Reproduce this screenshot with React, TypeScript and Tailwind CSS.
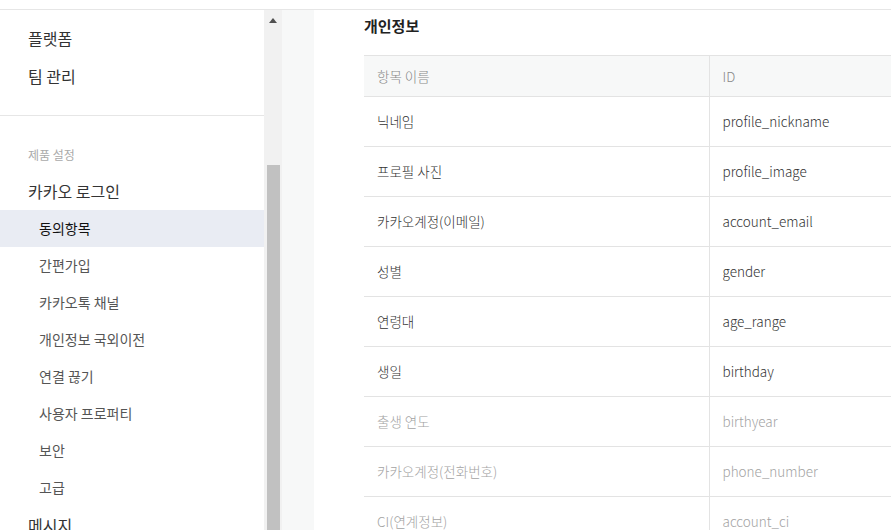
import React from "react";

const font = { fontFamily: '"Noto Sans CJK KR", "Noto Sans", sans-serif' };

const subMenu = ["동의항목", "간편가입", "카카오톡 채널", "개인정보 국외이전", "연결 끊기", "사용자 프로퍼티", "보안", "고급"];

const rows: Array<{ name: string; id: string; muted?: boolean }> = [
  { name: "닉네임", id: "profile_nickname" },
  { name: "프로필 사진", id: "profile_image" },
  { name: "카카오계정(이메일)", id: "account_email" },
  { name: "성별", id: "gender" },
  { name: "연령대", id: "age_range" },
  { name: "생일", id: "birthday" },
  { name: "출생 연도", id: "birthyear", muted: true },
  { name: "카카오계정(전화번호)", id: "phone_number", muted: true },
  { name: "CI(연계정보)", id: "account_ci", muted: true },
];

function Sidebar() {
  return (
    <aside className="w-[264px] shrink-0 bg-white">
      <div className="pt-[9px] pb-[20px] border-b border-[#e6e6e6]">
        <div className="flex h-[38px] items-center pl-[28px] text-[16px] text-[#333]">플랫폼</div>
        <div className="flex h-[38px] items-center pl-[28px] text-[16px] text-[#333]">팀 관리</div>
      </div>
      <div className="pt-[22px]">
        <div className="flex h-[34px] items-center pl-[28px] text-[12px] text-[#aaa]">제품 설정</div>
        <div className="flex h-[38px] items-center pl-[28px] text-[16px] text-[#333]">카카오 로그인</div>
        {subMenu.map((item, i) => (
          <div
            key={item}
            className={
              i === 0
                ? "flex h-[37px] items-center bg-[#e9ecf3] pl-[39px] text-[14px] text-[#111]"
                : "flex h-[37px] items-center pl-[39px] text-[14px] text-[#555]"
            }
          >
            {item}
          </div>
        ))}
        <div className="flex h-[38px] items-center pl-[28px] text-[16px] text-[#333]">메시지</div>
      </div>
    </aside>
  );
}

function Scrollbar() {
  return (
    <div className="flex w-[18px] shrink-0 flex-col items-center bg-[#f1f1f1]">
      <div className="flex h-[20px] w-full items-center justify-center pt-[1px]">
        <svg width="8" height="5" viewBox="0 0 8 5">
          <path d="M0 5 L4 0 L8 5 Z" fill="#505050" />
        </svg>
      </div>
      <div className="mt-[135px] w-[13px] flex-1 bg-[#c1c1c1]" />
    </div>
  );
}

export default function App() {
  return (
    <div className="flex h-[530px] w-[891px] flex-col overflow-hidden bg-white" style={font}>
      <div className="h-[10px] shrink-0 border-b border-[#e6e6e6] bg-white" />
      <div className="flex min-h-0 flex-1">
        <Sidebar />
        <Scrollbar />
        <div className="w-[32px] shrink-0 bg-[#f7f8f8]" />
        <main className="min-w-0 flex-1 bg-white pl-[50px]">
          <h2 className="h-[45px] pt-[5px] text-[15px] leading-[22px] font-bold text-[#222]">개인정보</h2>
          <table className="w-[600px] border-collapse text-[13.5px] font-light">
            <thead>
              <tr className="h-[41px] border-y border-[#e3e3e3] bg-[#f7f8f8] text-[#888]">
                <th className="w-[345px] border-r border-[#e3e3e3] pl-[13px] text-left font-light">항목 이름</th>
                <th className="pl-[13px] text-left font-light">ID</th>
              </tr>
            </thead>
            <tbody>
              {rows.map((row) => (
                <tr key={row.id} className={row.muted ? "h-[50px] border-b border-[#e3e3e3] text-[#a3a3a3]" : "h-[50px] border-b border-[#e3e3e3] text-[#333]"}>
                  <td className="border-r border-[#e3e3e3] pl-[13px]">{row.name}</td>
                  <td className="pl-[13px]">{row.id}</td>
                </tr>
              ))}
            </tbody>
          </table>
        </main>
      </div>
    </div>
  );
}
